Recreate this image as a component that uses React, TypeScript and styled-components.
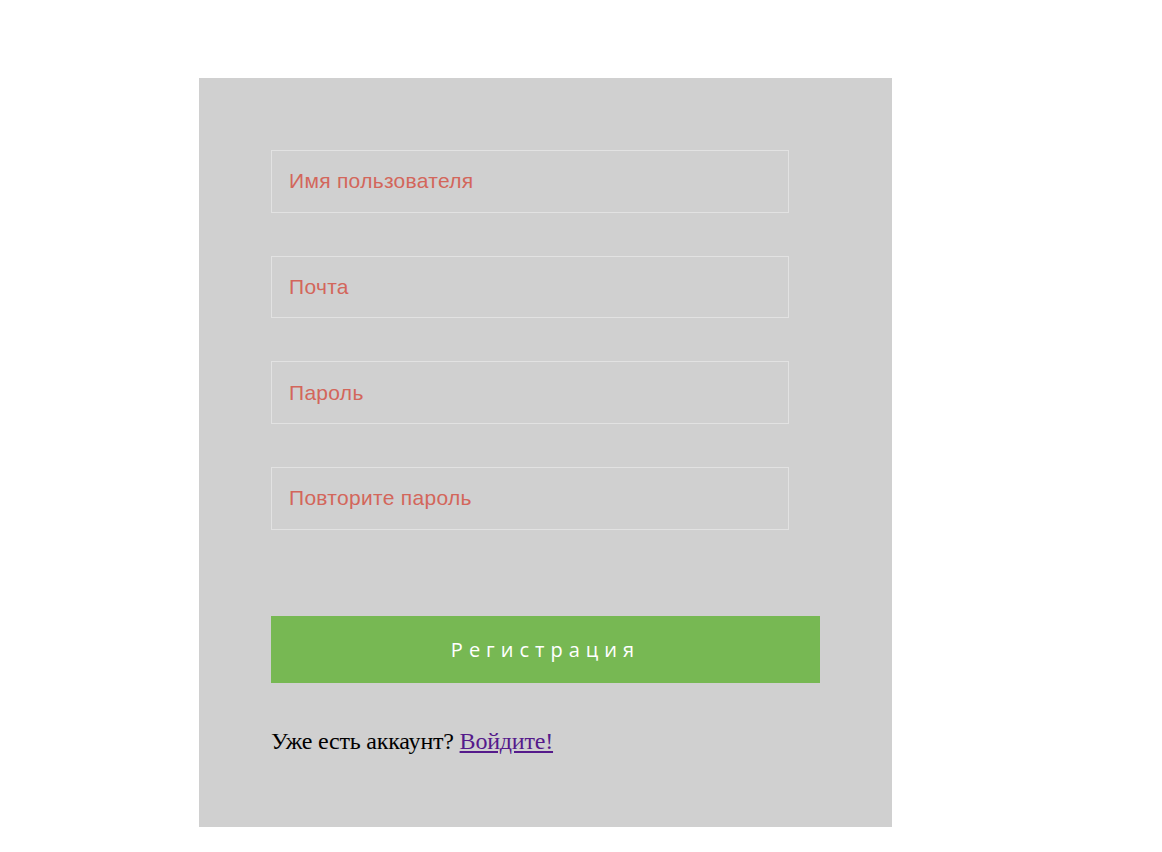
import React from "react";
import styled, { createGlobalStyle } from "styled-components";

const Global = createGlobalStyle`
  html, body { margin: 0; padding: 0; background: #ffffff; }
  body { font-family: "Liberation Serif", "Times New Roman", serif; }
  * { box-sizing: border-box; }
`;

const Page = styled.div`
  padding: 78px 0 0 199px;
`;

const Panel = styled.form`
  width: 693px;
  height: 749px;
  background: #d0d0d0;
  padding: 72px 72px 0 72px;
  display: flex;
  flex-direction: column;
`;

const Field = styled.input`
  flex: none;
  width: 518px;
  height: 62.67px;
  margin: 0 0 43px 0;
  padding: 0 17px;
  border: 1px solid #e2e2e2;
  background: transparent;
  font-family: "Liberation Sans", Arial, sans-serif;
  font-size: 21px;
  letter-spacing: 0.3px;
  color: #333;
  outline: none;
  &::placeholder { color: #d3665b; opacity: 1; }
`;

const Submit = styled.button`
  flex: none;
  width: 549px;
  height: 67px;
  margin-top: 43.33px;
  border: none;
  background: #77b853;
  color: #ffffff;
  font-family: "Open Sans", sans-serif;
  font-size: 20px;
  letter-spacing: 6px;
  padding: 0;
  cursor: pointer;
`;

const Note = styled.p`
  margin: 45px 0 0 0;
  font-family: "Liberation Serif", "Times New Roman", serif;
  font-size: 24px;
  line-height: 27px;
  letter-spacing: -0.2px;
  color: #000;
`;

const Link = styled.a`
  color: #551a8b;
  text-decoration: underline;
`;

export default function App() {
  return (
    <>
      <Global />
      <Page>
        <Panel onSubmit={(e) => e.preventDefault()}>
          <Field type="text" placeholder="Имя пользователя" />
          <Field type="email" placeholder="Почта" />
          <Field type="password" placeholder="Пароль" />
          <Field type="password" placeholder="Повторите пароль" />
          <Submit type="submit">Регистрация</Submit>
          <Note>
            Уже есть аккаунт? <Link href="#">Войдите!</Link>
          </Note>
        </Panel>
      </Page>
    </>
  );
}
